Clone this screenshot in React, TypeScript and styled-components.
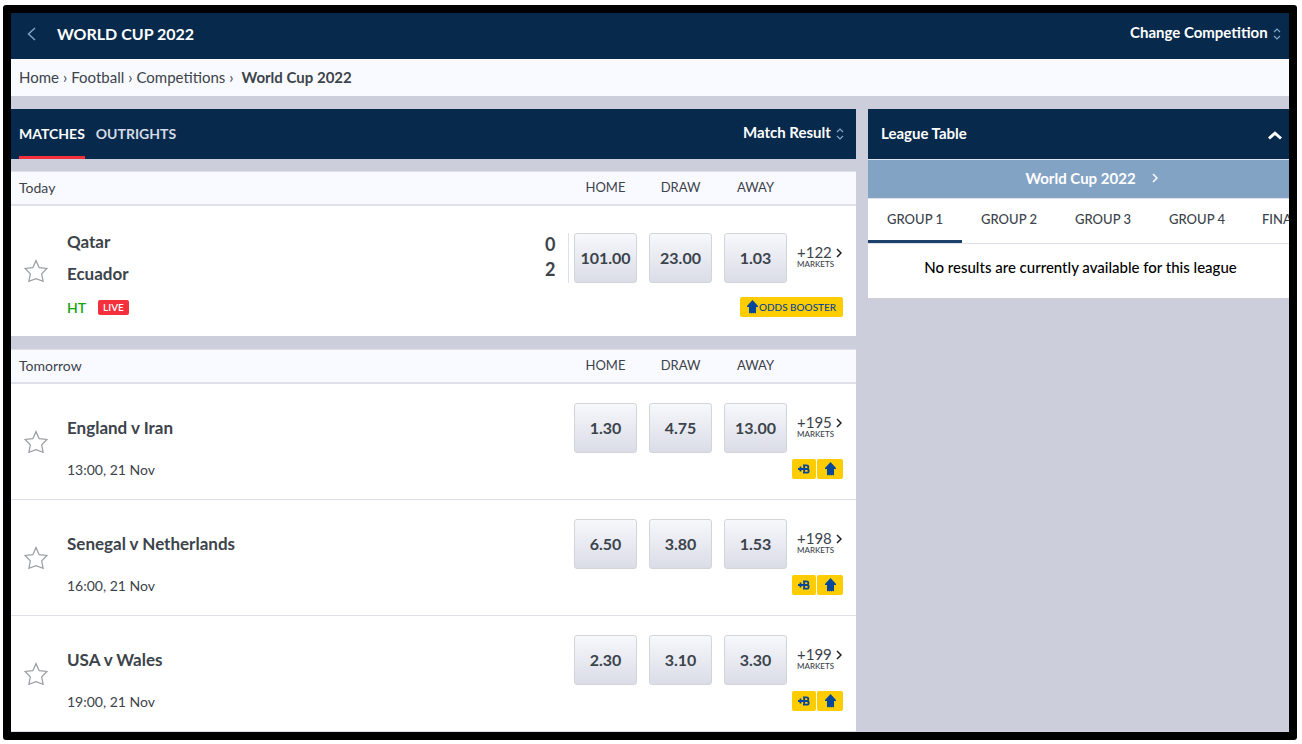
import React from "react";
import styled, { createGlobalStyle } from "styled-components";

const navy = "#07294b";
const ink = "#3c434b";
const line = "#dfe0ea";
const backdrop = "#cccedb";

const GlobalStyle = createGlobalStyle`
  *, *::before, *::after { box-sizing: border-box; }
  body {
    margin: 0;
    background: #fff;
    color: ${ink};
    font-family: Lato, "Liberation Sans", sans-serif;
    font-size: 14px;
  }
  button, select { font: inherit; color: inherit; margin: 0; }
  h1, h2, p, ol, ul { margin: 0; padding: 0; }
  ol, ul { list-style: none; }
`;

const Page = styled.div`
  display: flex;
  min-height: 100vh;
  padding: 5px 5px 4px 3px;
`;

const Frame = styled.div`
  flex: 1;
  min-width: 0;
  border: 8px solid #000;
  border-radius: 3px;
  background: ${backdrop};
`;

const TitleBar = styled.header`
  display: flex;
  align-items: center;
  height: 46px;
  padding: 0 8px 4px 16px;
  background: ${navy};
  color: #fff;
`;

const BackButton = styled.button`
  display: flex;
  padding: 0;
  border: 0;
  background: none;
  color: #7fa3cc;
`;

const Title = styled.h1`
  flex: 1;
  margin-left: 21px;
  font-size: 16px;
  font-weight: 700;
  line-height: 20px;
`;

const Picker = styled.label`
  display: flex;
  align-items: center;
  gap: 5px;
  color: #84a6cd;
`;

const PickerSelect = styled.select`
  appearance: none;
  padding: 0 0 4px;
  border: 0;
  background: transparent;
  color: #fff;
  font-size: 15px;
  font-weight: 700;
  line-height: 20px;
`;

const Crumbs = styled.nav`
  height: 37px;
  padding: 0 8px;
  background: #f9faff;
`;

const CrumbList = styled.ol`
  display: flex;
  align-items: center;
  gap: 4px;
  font-size: 15px;
  line-height: 37px;
`;

const CrumbLink = styled.a`
  color: inherit;
  text-decoration: none;
`;

const CrumbCurrent = styled.span`
  margin-left: 4px;
  font-weight: 700;
`;

const Columns = styled.div`
  display: grid;
  grid-template-columns: minmax(0, 1fr) 421px;
  align-items: start;
  gap: 12px;
  padding-top: 13px;
`;

const MatchTabs = styled.div`
  display: flex;
  align-items: center;
  height: 50px;
  padding: 0 12px 0 8px;
  background: ${navy};
`;

const TabGroup = styled.div`
  display: flex;
  flex: 1;
  gap: 11px;
  align-self: stretch;
`;

const MatchTab = styled.button<{ $active?: boolean }>`
  padding: 1px 0 0;
  border: 0;
  border-bottom: 3px solid ${(p) => (p.$active ? "#f4303d" : "transparent")};
  background: none;
  color: ${(p) => (p.$active ? "#fff" : "#d5dbe6")};
  font-size: 14px;
  font-weight: 700;
`;

const Day = styled.section`
  margin-top: 12px;
  & + & { margin-top: 13px; }
`;

const DayHead = styled.div`
  display: flex;
  align-items: center;
  height: 35px;
  padding: 0 69px 2px 8px;
  border-top: 1px solid ${line};
  border-bottom: 2px solid ${line};
  background: #f9faff;
`;

const DayName = styled.h2`
  flex: 1;
  font-size: 14px;
  font-weight: 400;
`;

const OutcomeNames = styled.div`
  display: flex;
  gap: 12px;
`;

const OutcomeName = styled.span`
  width: 63px;
  font-size: 13px;
  line-height: 18px;
  text-align: center;
`;

const Row = styled.article<{ $live?: boolean }>`
  display: flex;
  height: ${(p) => (p.$live ? 130 : 116)}px;
  padding-right: 13px;
  border-bottom: ${(p) => (p.$live ? 0 : 1)}px solid ${line};
  background: #fff;
`;

const StarButton = styled.button`
  display: flex;
  align-items: center;
  width: 56px;
  padding: 0 0 0 13px;
  border: 0;
  background: none;
  color: #9b9ea3;
`;

const Info = styled.div<{ $live?: boolean }>`
  flex: 1;
  min-width: 0;
  padding-top: ${(p) => (p.$live ? 20 : 28)}px;
`;

const Team = styled.p`
  font-size: 17px;
  font-weight: 700;
  line-height: 32px;
`;

const Kickoff = styled.p`
  margin-top: 10px;
  line-height: 32px;
`;

const LiveLine = styled.div`
  display: flex;
  align-items: center;
  gap: 12px;
  height: 34px;
  color: #11a50e;
  font-weight: 600;
`;

const LiveTag = styled.span`
  padding: 0 5px;
  border-radius: 2px;
  background: #f4303d;
  color: #fff;
  font-size: 10px;
  line-height: 15px;
`;

const Scores = styled.div`
  display: flex;
  flex-direction: column;
  gap: 2px;
  align-self: flex-start;
  width: 24px;
  height: 50px;
  margin: 27px 5px 0 0;
  border-right: 1px solid ${line};
  font-size: 18px;
  font-weight: 700;
  line-height: 23px;
`;

const Betting = styled.div<{ $live?: boolean }>`
  display: flex;
  flex-direction: column;
  align-items: flex-end;
  padding-top: ${(p) => (p.$live ? 27 : 19)}px;
`;

const OddsLine = styled.div`
  display: flex;
  gap: 12px;
`;

const OddsButton = styled.button`
  width: 63px;
  height: 50px;
  padding: 0 0 2px;
  border: 1px solid #d3d4d8;
  border-radius: 3px;
  background: linear-gradient(#f7f8fc, #dadce7);
  font-size: 16px;
  font-weight: 700;
`;

const MarketsLink = styled.a`
  display: grid;
  grid-template-columns: 39px 6px;
  align-content: start;
  align-items: center;
  width: 46px;
  margin-left: -2px;
  padding-top: 12px;
  color: inherit;
  text-decoration: none;
  & > svg { color: #1d2126; }
`;

const MarketCount = styled.span`
  font-size: 15px;
  line-height: 15px;
`;

const MarketLabel = styled.span`
  font-size: 8px;
  font-weight: 500;
  line-height: 8px;
`;

const Badges = styled.div<{ $live?: boolean }>`
  display: flex;
  gap: 1px;
  margin-top: ${(p) => (p.$live ? 14 : 6)}px;
`;

const Badge = styled.span<{ $width: number }>`
  display: flex;
  align-items: center;
  justify-content: center;
  gap: 1px;
  width: ${(p) => p.$width}px;
  height: 20px;
  border-radius: 2px;
  background: #ffcc00;
  color: #04469a;
  font-size: 10px;
  font-weight: 500;
`;

const LeagueHead = styled.div`
  display: flex;
  align-items: center;
  justify-content: space-between;
  height: 50px;
  padding: 0 7px 0 13px;
  background: ${navy};
  color: #fff;
`;

const LeagueTitle = styled.h2`
  padding-bottom: 2px;
  font-size: 15px;
  font-weight: 700;
`;

const PlainButton = styled.button`
  display: flex;
  padding: 3px 0 0;
  border: 0;
  background: none;
`;

const LeagueLink = styled.a`
  display: grid;
  grid-template-columns: 1fr auto 1fr;
  align-items: center;
  column-gap: 16px;
  height: 40px;
  padding: 0 0 2px 4px;
  border-top: 1px solid #dfe6f2;
  border-bottom: 1px solid ${line};
  background: #83a3c4;
  color: #fff;
  font-size: 15px;
  font-weight: 700;
  text-decoration: none;
  & > span { grid-column: 2; }
`;

const Groups = styled.div`
  display: flex;
  height: 45px;
  overflow: hidden;
  border-bottom: 1px solid ${line};
  background: #fff;
`;

const GroupTab = styled.button<{ $active?: boolean }>`
  flex: none;
  min-width: 94px;
  padding: 0 18px 1px;
  border: 0;
  border-bottom: 3px solid ${(p) => (p.$active ? "#1c426c" : "transparent")};
  background: none;
  font-size: 13px;
  font-weight: 500;
  text-align: center;
  &:last-child { text-align: left; }
`;

const EmptyNote = styled.p`
  height: 54px;
  padding-left: 4px;
  background: #fff;
  color: #000;
  font-size: 15px;
  font-weight: 500;
  line-height: 46px;
  text-align: center;
`;

const Sorter = () => (
  <svg width="8" height="12" viewBox="0 0 8 12" fill="none" stroke="currentColor" strokeWidth="1.200" aria-hidden="true">
    <path d="M1 4 4 1l3 3M1 8l3 3 3-3" />
  </svg>
);

const Chevron = () => (
  <svg width="6" height="10" viewBox="0 0 6 10" fill="none" stroke="currentColor" strokeWidth="1.5" aria-hidden="true">
    <path d="M1 1l4 4-4 4" />
  </svg>
);

const Star = () => (
  <svg width="24" height="24" viewBox="0 0 25 24" fill="none" stroke="currentColor" strokeWidth="1.3" aria-hidden="true">
    <path d="M12.5 1.200l3.300 7.300 8 .9-5.400 5.600 1.500 7.800-7.400-2.800-7.400 2.800 1.500-7.800L1.200 9.400l8-.9z" />
  </svg>
);

const BoostArrow = () => (
  <svg width="11" height="14" viewBox="0 0 11 14" fill="currentColor" aria-hidden="true">
    <path d="M5.500 0 11 6v1H9v6.500L7.500 12.700l-1 .8-1-.8-1 .8-1-.8-1.500.8V7H0V6z" />
  </svg>
);

const PlusB = () => (
  <svg width="12" height="10" viewBox="0 0 12 10" fill="none" stroke="currentColor" strokeWidth="1.800" aria-label="Bet builder" role="img">
    <path d="M0 5h10M2.500 2.500v5M6.200 1v8M5 1.400h3.800c2 0 2 3.500 0 3.600 2.500.1 2.500 3.700 0 3.700H5" />
  </svg>
);

type Match = { name: string; time: string; odds: string[]; markets: number };

const tomorrow: Match[] = [
  { name: "England v Iran", time: "13:00, 21 Nov", odds: ["1.30", "4.75", "13.00"], markets: 195 },
  { name: "Senegal v Netherlands", time: "16:00, 21 Nov", odds: ["6.50", "3.80", "1.53"], markets: 198 },
  { name: "USA v Wales", time: "19:00, 21 Nov", odds: ["2.30", "3.10", "3.30"], markets: 199 },
];

const DayHeader = ({ name }: { name: string }) => (
  <DayHead>
    <DayName>{name}</DayName>
    <OutcomeNames>
      {["HOME", "DRAW", "AWAY"].map((o) => (
        <OutcomeName key={o}>{o}</OutcomeName>
      ))}
    </OutcomeNames>
  </DayHead>
);

const Odds = ({ odds, markets }: { odds: string[]; markets: number }) => (
  <OddsLine>
    {odds.map((o) => (
      <OddsButton key={o} type="button">{o}</OddsButton>
    ))}
    <MarketsLink href="#markets">
      <MarketCount>+{markets}</MarketCount>
      <Chevron />
      <MarketLabel>MARKETS</MarketLabel>
    </MarketsLink>
  </OddsLine>
);

export default function App() {
  return (
    <>
      <GlobalStyle />
      <Page>
        <Frame>
          <TitleBar>
            <BackButton type="button" aria-label="Back">
              <svg width="9" height="14" viewBox="0 0 9 14" fill="none" stroke="currentColor" strokeWidth="1.500">
                <path d="M8 1 1.500 7 8 13" />
              </svg>
            </BackButton>
            <Title>WORLD CUP 2022</Title>
            <Picker>
              <PickerSelect aria-label="Competition">
                <option>Change Competition</option>
              </PickerSelect>
              <Sorter />
            </Picker>
          </TitleBar>
          <Crumbs aria-label="Breadcrumb">
            <CrumbList>
              <li><CrumbLink href="#home">Home</CrumbLink></li>
              <li>›</li>
              <li><CrumbLink href="#football">Football</CrumbLink></li>
              <li>›</li>
              <li><CrumbLink href="#competitions">Competitions</CrumbLink></li>
              <li>›</li>
              <li><CrumbCurrent>World Cup 2022</CrumbCurrent></li>
            </CrumbList>
          </Crumbs>
          <Columns>
            <main>
              <MatchTabs>
                <TabGroup>
                  <MatchTab type="button" $active>MATCHES</MatchTab>
                  <MatchTab type="button">OUTRIGHTS</MatchTab>
                </TabGroup>
                <Picker>
                  <PickerSelect aria-label="Market">
                    <option>Match Result</option>
                  </PickerSelect>
                  <Sorter />
                </Picker>
              </MatchTabs>
              <Day>
                <DayHeader name="Today" />
                <Row $live>
                  <StarButton type="button" aria-label="Add to favourites"><Star /></StarButton>
                  <Info $live>
                    <Team>Qatar</Team>
                    <Team>Ecuador</Team>
                    <LiveLine>HT <LiveTag>LIVE</LiveTag></LiveLine>
                  </Info>
                  <Scores>
                    <p>0</p>
                    <p>2</p>
                  </Scores>
                  <Betting $live>
                    <Odds odds={["101.00", "23.00", "1.03"]} markets={122} />
                    <Badges $live>
                      <Badge $width={103}><BoostArrow />ODDS BOOSTER</Badge>
                    </Badges>
                  </Betting>
                </Row>
              </Day>
              <Day>
                <DayHeader name="Tomorrow" />
                {tomorrow.map((m) => (
                  <Row key={m.name}>
                    <StarButton type="button" aria-label="Add to favourites"><Star /></StarButton>
                    <Info>
                      <Team>{m.name}</Team>
                      <Kickoff>{m.time}</Kickoff>
                    </Info>
                    <Betting>
                      <Odds odds={m.odds} markets={m.markets} />
                      <Badges>
                        <Badge $width={24}><PlusB /></Badge>
                        <Badge $width={26}><BoostArrow /></Badge>
                      </Badges>
                    </Betting>
                  </Row>
                ))}
              </Day>
            </main>
            <aside>
              <LeagueHead>
                <LeagueTitle>League Table</LeagueTitle>
                <PlainButton type="button" aria-label="Collapse">
                  <svg width="14" height="9" viewBox="0 0 14 9" fill="none" stroke="#fff" strokeWidth="3">
                    <path d="M1 7.500 7 2.200l6 5.300" />
                  </svg>
                </PlainButton>
              </LeagueHead>
              <LeagueLink href="#league">
                <span>World Cup 2022</span>
                <Chevron />
              </LeagueLink>
              <Groups>
                <GroupTab type="button" $active>GROUP 1</GroupTab>
                <GroupTab type="button">GROUP 2</GroupTab>
                <GroupTab type="button">GROUP 3</GroupTab>
                <GroupTab type="button">GROUP 4</GroupTab>
                <GroupTab type="button">FINAL</GroupTab>
              </Groups>
              <EmptyNote>No results are currently available for this league</EmptyNote>
            </aside>
          </Columns>
        </Frame>
      </Page>
    </>
  );
}
